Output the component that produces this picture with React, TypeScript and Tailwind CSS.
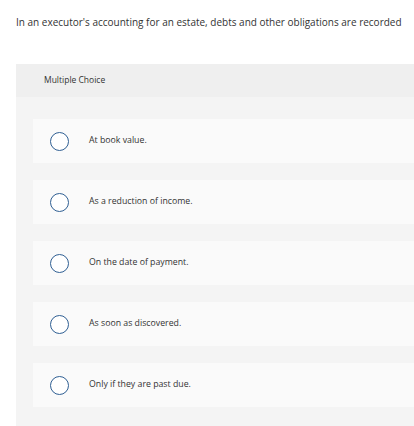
import React from 'react';

const options = [
  'At book value.',
  'As a reduction of income.',
  'On the date of payment.',
  'As soon as discovered.',
  'Only if they are past due.',
];

export default function App() {
  return (
    <div className="w-[414px] h-[426px] bg-white overflow-hidden" style={{ fontFamily: '"Open Sans", "Liberation Sans", Arial, sans-serif' }}>
      <p className="pl-4 pt-[16px] text-[10px] leading-[13px] text-[#333]">
        In an executor's accounting for an estate, debts and other obligations are recorded
      </p>
      <section className="ml-4 mt-[35px] bg-[#f4f4f4] pb-5">
        <div className="h-[33px] bg-[#efefef] pl-7 flex items-center text-[8.5px] text-[#333]">Multiple Choice</div>
        <div className="pl-[17px] pt-[22px] flex flex-col gap-[17px]">
          {options.map((opt) => (
            <div key={opt} className="h-[44px] bg-[#fafafa] flex items-center">
              <span className="ml-[17px] w-[19px] h-[19px] rounded-full border-[1.5px] border-[#2f5f93] bg-white shrink-0" />
              <span className="ml-5 text-[8.75px] text-[#333]">{opt}</span>
            </div>
          ))}
        </div>
      </section>
    </div>
  );
}
